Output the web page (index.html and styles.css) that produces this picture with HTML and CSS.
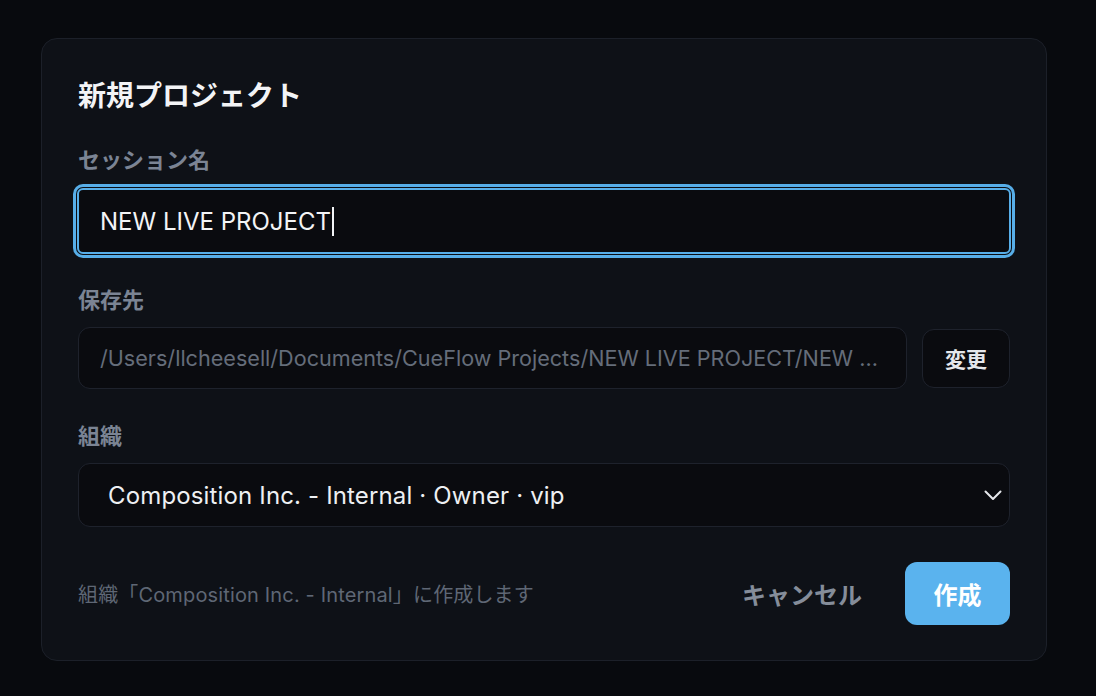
FILE: index.html
```html
<!DOCTYPE html>
<html lang="ja">
<head>
<meta charset="utf-8">
<title>新規プロジェクト</title>
<link rel="stylesheet" href="styles.css">
</head>
<body>
<div class="dialog">
  <h1 class="title">新規プロジェクト</h1>

  <div class="field field-name">
    <label class="label">セッション名</label>
    <div class="input focused"><span class="value">NEW LIVE PROJECT</span><span class="caret"></span></div>
  </div>

  <div class="field field-path">
    <label class="label">保存先</label>
    <div class="path-row">
      <div class="input path"><span class="path-text">/Users/llcheesell/Documents/CueFlow Projects/NEW LIVE PROJECT/NEW ...</span></div>
      <button class="btn-change">変更</button>
    </div>
  </div>

  <div class="field field-org">
    <label class="label">組織</label>
    <div class="input select">
      <span class="select-text">Composition Inc. - Internal · Owner · vip</span>
      <svg class="chevron" width="18" height="11" viewBox="0 0 18 11"><path d="M1.5 1.5 L9 9 L16.5 1.5" fill="none" stroke="#e5e7eb" stroke-width="2" stroke-linecap="round" stroke-linejoin="round"/></svg>
    </div>
  </div>

  <div class="footer">
    <span class="hint">組織「Composition Inc. - Internal」に作成します</span>
    <div class="actions">
      <button class="btn-cancel">キャンセル</button>
      <button class="btn-create">作成</button>
    </div>
  </div>
</div>
</body>
</html>
```

FILE: styles.css
```css
* { box-sizing: border-box; }
html, body {
  margin: 0;
  padding: 0;
  background: #080a0e;
  width: 1096px;
  height: 696px;
  overflow: hidden;
}
body {
  font-family: Inter, "Noto Sans CJK JP", sans-serif;
  color: #e5e7eb;
  padding: 38px 0 0 41px;
}
.dialog {
  width: 1006px;
  height: 623px;
  background: #0e1117;
  border: 1px solid #1c2029;
  border-radius: 16px;
  padding: 37px 36px 0 36px;
  display: flex;
  flex-direction: column;
}
.title {
  margin: 0;
  font-size: 28px;
  line-height: 36px;
  font-weight: 700;
  color: #f3f4f6;
  font-family: "Noto Sans CJK JP", sans-serif;
}
.field {
  display: flex;
  flex-direction: column;
  gap: 17px;
}
.field-name { margin-top: 34px; }
.field-path { margin-top: 32px; }
.field-org { margin-top: 33px; }
.label {
  font-family: "Noto Sans CJK JP", sans-serif;
  font-size: 22px;
  line-height: 24px;
  font-weight: 700;
  color: #7b8494;
}
.input {
  background: #0a0b0f;
  border: 1px solid #1e222c;
  border-radius: 12px;
  display: flex;
  align-items: center;
}
.input.focused {
  height: 66px;
  margin: 1px -1px 0 -1px;
  border: 2px solid #57aee8;
  border-radius: 6px;
  box-shadow: 0 0 0 1px #0b0d12, 0 0 0 4px #57aee8;
  padding-left: 21px;
  font-size: 24px;
  color: #f3f4f6;
}
.caret {
  display: inline-block;
  width: 2px;
  height: 29px;
  background: #f3f4f6;
  margin-left: 1px;
}
.path-row {
  display: flex;
  align-items: center;
  gap: 15px;
}
.input.path {
  flex: 1;
  min-width: 0;
  height: 62px;
  padding: 0 16px 0 21px;
  overflow: hidden;
}
.path-text {
  display: block;
  min-width: 0;
  font-size: 21.6px;
  color: #656d7a;
  white-space: nowrap;
  overflow: hidden;
  text-overflow: ellipsis;
}
.btn-change {
  flex: none;
  width: 88px;
  height: 59px;
  background: #0a0b0f;
  border: 1px solid #1e222c;
  border-radius: 12px;
  font-family: "Noto Sans CJK JP", sans-serif;
  font-size: 21px;
  font-weight: 700;
  color: #e5e7eb;
  padding: 0;
}
.input.select {
  height: 64px;
  padding: 0 7px 0 29px;
  justify-content: space-between;
}
.select-text {
  font-size: 24px;
  letter-spacing: 0.15px;
  color: #eef0f3;
}
.chevron { margin-top: 1px; }
.footer {
  margin-top: 35px;
  display: flex;
  align-items: center;
  justify-content: space-between;
}
.hint {
  font-family: Inter, "Noto Sans CJK JP", sans-serif;
  font-size: 20px;
  letter-spacing: 0.15px;
  color: #5f6775;
}
.actions {
  display: flex;
  align-items: center;
  gap: 43px;
}
.btn-cancel {
  background: none;
  border: none;
  padding: 0;
  font-family: "Noto Sans CJK JP", sans-serif;
  font-size: 24px;
  font-weight: 700;
  color: #858d9a;
}
.btn-create {
  width: 105px;
  height: 63px;
  background: #5ab3ee;
  border: none;
  border-radius: 12px;
  font-family: "Noto Sans CJK JP", sans-serif;
  font-size: 24px;
  font-weight: 700;
  color: #ffffff;
  padding: 0;
}
```
